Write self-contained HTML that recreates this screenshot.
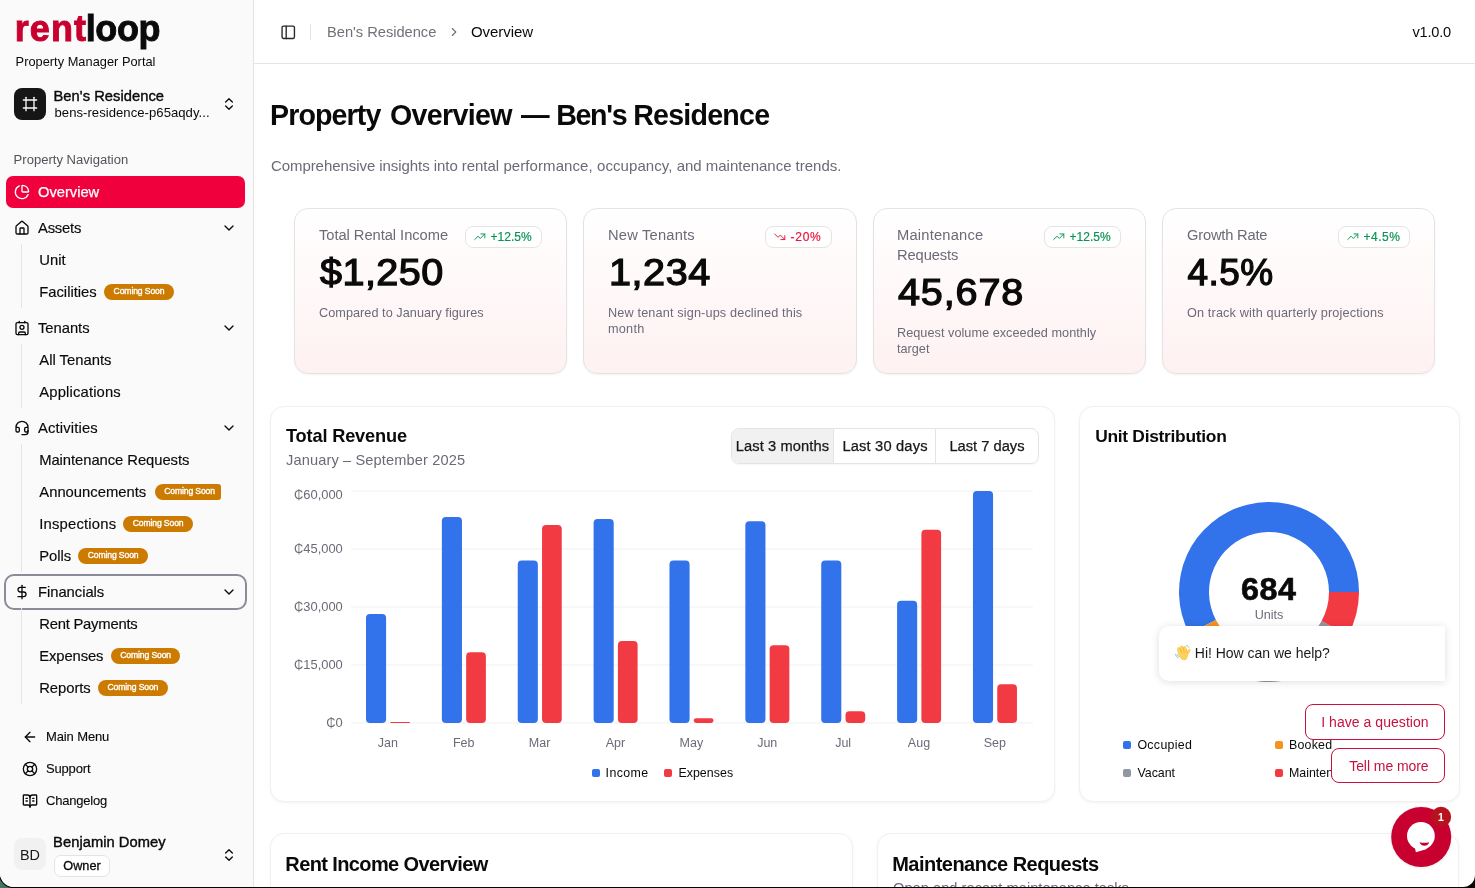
<!DOCTYPE html>
<html lang="en">
<head>
<meta charset="utf-8">
<title>Rentloop — Property Overview</title>
<style>
*{box-sizing:border-box;margin:0;padding:0}
html,body{width:1475px;height:888px;overflow:hidden;background:#060807}
body:before{content:"";position:absolute;left:0;top:870px;width:15px;height:18px;background:linear-gradient(90deg,#4c7462,#3a5f52)}
body{font-family:"Liberation Sans",Arial,sans-serif;color:#0a0a0a;-webkit-font-smoothing:antialiased}
#win{position:absolute;left:0;top:0;width:1475px;height:887px;background:#fff;overflow:hidden;border-radius:0 0 12px 14px;will-change:transform;box-shadow:0 0 0 1.2px #040605}
.abs{position:absolute;white-space:nowrap}
svg.ic{position:absolute;fill:none;stroke:currentColor;stroke-width:2;stroke-linecap:round;stroke-linejoin:round}
/* sidebar */
#side{position:absolute;left:0;top:0;width:254px;height:888px;background:#fafafa;border-right:1px solid #e4e4e7}
.nav{position:absolute;left:38px;-webkit-text-stroke:.15px currentColor;font-size:14.8px;line-height:20px;color:#0a0a0a;white-space:nowrap}
.sub{position:absolute;left:39.2px;-webkit-text-stroke:.15px currentColor;font-size:14.8px;line-height:20px;color:#0a0a0a;white-space:nowrap}
.soon{position:absolute;height:16.3px;letter-spacing:-.12px;border-radius:8px;background:#cc7a00;color:#fff;font-size:8.6px;line-height:14.8px;text-align:center;white-space:nowrap;overflow:hidden;-webkit-text-stroke:.35px #fff}
.vl{position:absolute;left:21px;width:1px;background:#e4e4e7}
.foot{position:absolute;left:46px;-webkit-text-stroke:.12px currentColor;font-size:13px;line-height:18px;white-space:nowrap}
/* main */
#hdr{position:absolute;left:254px;top:0;width:1221px;height:64px;border-bottom:1px solid #e4e4e7;background:#fff}
.card{position:absolute;top:208px;width:273px;height:166px;border:1px solid #e3e3e6;border-radius:14px;background:linear-gradient(180deg,#ffffff 0%,#fff8f8 50%,#fef1f2 100%);box-shadow:0 1px 2px rgba(0,0,0,.05)}
.card .lbl{position:absolute;left:24px;top:16px;font-size:14.7px;line-height:20px;color:#6b6b78;white-space:nowrap}
.card .val{position:absolute;left:24.5px;font-size:37px;font-weight:400;-webkit-text-stroke:1.25px #0a0a0a;letter-spacing:2px;line-height:40px;color:#0a0a0a;white-space:nowrap;transform:scaleX(1.07);transform-origin:0 0}
.card .ft{position:absolute;left:24px;font-size:12.7px;line-height:16px;color:#6b6b78;white-space:nowrap}
.chip{position:absolute;top:17px;height:22px;border:1px solid #e4e4e7;border-radius:8px;background:#fff;font-size:12px;line-height:20px;white-space:nowrap;-webkit-text-stroke:.2px currentColor}
.chip span{position:absolute;left:24.6px;top:0}
.up{color:#0c9456}.down{color:#e6173d}
.panel{position:absolute;background:#fff;border:1px solid #f1f1f3;border-radius:14px;box-shadow:0 1px 3px rgba(0,0,0,.05)}
.ptitle{position:absolute;font-size:18.2px;font-weight:700;line-height:24px;letter-spacing:-.2px;white-space:nowrap}
.lg{position:absolute;font-size:12.4px;line-height:16px;color:#0a0a0a;white-space:nowrap}
.sb{-webkit-text-stroke:.4px currentColor}.md{-webkit-text-stroke:.25px currentColor}
.sq{position:absolute;width:8px;height:8px;border-radius:2px}
</style>
</head>
<body>
<div id="win">

<!-- ============ MAIN ============ -->
<div id="hdr">
  <svg class="ic" style="left:25.55px;top:23.65px;color:#27272a" width="16.500" height="16.500" viewBox="0 0 24 24"><rect width="18" height="18" x="3" y="3" rx="2"/><path d="M9 3v18"/></svg>
  <div class="abs" style="left:56px;top:24px;width:1px;height:16px;background:#e4e4e7"></div>
  <div class="abs" id="bc1" style="letter-spacing:-0.03px;left:73.0px;top:22px;font-size:14.7px;line-height:20px;color:#71717a">Ben's Residence</div>
  <svg class="ic" style="left:192.9px;top:25px;color:#71717a" width="14" height="14" viewBox="0 0 24 24"><path d="m9 18 6-6-6-6"/></svg>
  <div class="abs" id="bc2" style="letter-spacing:-0.07px;left:217px;top:22px;font-size:15px;line-height:20px;color:#0a0a0a">Overview</div>
  <div class="abs" id="ver" style="letter-spacing:-0.2px;right:24px;top:22px;font-size:14.6px;line-height:20px;color:#0a0a0a">v1.0.0</div>
</div>

<h1 class="abs" id="h1" style="left:0;top:96px;font-size:28.6px;font-weight:700;line-height:38px;letter-spacing:-.8px"><span class="abs" style="letter-spacing:-0.9px;left:270px;top:0">Property</span> <span class="abs" style="letter-spacing:-0.66px;left:390px;top:0">Overview</span> <span class="abs" style="left:520.9px;top:0">—</span> <span class="abs" style="letter-spacing:-1.32px;left:556.2px;top:0">Ben's</span> <span class="abs" style="letter-spacing:-0.77px;left:633.2px;top:0">Residence</span></h1>
<p class="abs" id="subt" style="left:0;top:156px;font-size:15px;line-height:20px;color:#6b6b78"><span class="abs" style="letter-spacing:-0.06px;left:270.9px;top:0">Comprehensive insights into rental</span> <span class="abs" style="letter-spacing:0.08px;left:503.4px;top:0">performance, occupancy,</span> <span class="abs" style="letter-spacing:-0.02px;left:676.7px;top:0">and maintenance trends.</span></p>

<!-- stat cards -->
<div class="card" style="left:294px">
  <div class="lbl" style="letter-spacing:-0.04px">Total Rental Income</div>
  <div class="chip up" style="left:170px;width:77px"><svg class="ic" style="left:7.2px;top:3.3px;stroke-width:1.7" width="13.500" height="13.500" viewBox="0 0 24 24"><path d="M3 17l6-6 4 4 8-8"/><path d="M14 7h7v7"/></svg><span style="letter-spacing:0px">+12.5%</span></div>
  <div class="val" style="letter-spacing:0.4px;top:44px">$1,250</div>
  <div class="ft" style="letter-spacing:0.04px;top:96px">Compared to January figures</div>
</div>
<div class="card" style="left:583px;width:274px">
  <div class="lbl" style="letter-spacing:0.2px">New Tenants</div>
  <div class="chip down" style="left:181px;width:67px"><svg class="ic" style="left:7.2px;top:3.3px;stroke-width:1.7" width="13.500" height="13.500" viewBox="0 0 24 24"><path d="M3 7l6 6 4-4 8 8"/><path d="M21 10v7h-7"/></svg><span style="letter-spacing:.7px">-20%</span></div>
  <div class="val" style="letter-spacing:0.5px;top:44px">1,234</div>
  <div class="ft" style="letter-spacing:0.14px;top:96px">New tenant sign-ups declined this</div><div class="ft" style="letter-spacing:0.25px;top:112px">month</div>
</div>
<div class="card" style="left:873px">
  <div class="lbl" style="letter-spacing:0.2px;left:23px">Maintenance</div><div class="lbl" style="letter-spacing:-0.1px;left:23px;top:36px">Requests</div>
  <div class="chip up" style="left:170px;width:77px"><svg class="ic" style="left:7.2px;top:3.3px;stroke-width:1.7" width="13.500" height="13.500" viewBox="0 0 24 24"><path d="M3 17l6-6 4 4 8-8"/><path d="M14 7h7v7"/></svg><span style="letter-spacing:0px">+12.5%</span></div>
  <div class="val" style="letter-spacing:0.8px;left:23.6px;top:64px">45,678</div>
  <div class="ft" style="letter-spacing:0.03px;left:23px;top:116px">Request volume exceeded monthly</div><div class="ft" style="letter-spacing:0.0px;left:23px;top:132px">target</div>
</div>
<div class="card" style="left:1162px">
  <div class="lbl" style="letter-spacing:-0.2px">Growth Rate</div>
  <div class="chip up" style="left:175px;width:72px"><svg class="ic" style="left:7.2px;top:3.3px;stroke-width:1.7" width="13.500" height="13.500" viewBox="0 0 24 24"><path d="M3 17l6-6 4 4 8-8"/><path d="M14 7h7v7"/></svg><span style="letter-spacing:.5px">+4.5%</span></div>
  <div class="val" style="letter-spacing:0.44px;transform:none;top:44px">4.5%</div>
  <div class="ft" style="letter-spacing:0.14px;top:96px">On track with quarterly projections</div>
</div>

<!-- REVENUE -->
<div class="panel" id="rev" style="left:270px;top:406px;width:785px;height:396px">
  <div class="ptitle" style="letter-spacing:-0.16px;left:15px;top:17px">Total Revenue</div>
  <div class="abs" style="letter-spacing:0.13px;left:15px;top:43px;font-size:14.6px;line-height:20px;color:#6b6b78">January – September 2025</div>
  <div class="abs" style="left:460px;top:21px;width:308px;height:36px;border:1px solid #e4e4e7;border-radius:8px;overflow:hidden;font-size:14.7px;line-height:34px;color:#18181b;box-shadow:0 1px 2px rgba(0,0,0,.04);-webkit-text-stroke:.25px #18181b">
    <div class="abs" style="left:0;top:0;width:101px;height:34px;background:#f1f1f2"></div><div class="abs" style="letter-spacing:0.1px;left:3.7px;top:0">Last 3 months</div>
    <div class="abs" style="left:101px;top:0;width:1px;height:34px;background:#e4e4e7"></div><div class="abs" style="letter-spacing:0.17px;left:110.4px;top:0">Last 30 days</div>
    <div class="abs" style="left:203px;top:0;width:1px;height:34px;background:#e4e4e7"></div><div class="abs" style="letter-spacing:-0.0px;left:217.4px;top:0">Last 7 days</div>
  </div>
  <svg id="chart" class="abs" style="left:0;top:70px" width="785" height="290" viewBox="0 0 785 290" font-family="Liberation Sans, Arial, sans-serif" font-size="12.5" fill="#6b6b78">
    <rect x="80" y="245.4" width="682" height="1" fill="#f1f1f3"/>
    <text x="71.8" y="250.2" text-anchor="end" font-size="12.9">₵0</text>
    <rect x="80" y="187.44" width="682" height="1" fill="#f1f1f3"/>
    <text x="71.8" y="192.24" text-anchor="end" font-size="12.9">₵15,000</text>
    <rect x="80" y="129.48" width="682" height="1" fill="#f1f1f3"/>
    <text x="71.8" y="134.28" text-anchor="end" font-size="12.9">₵30,000</text>
    <rect x="80" y="71.52" width="682" height="1" fill="#f1f1f3"/>
    <text x="71.8" y="76.32" text-anchor="end" font-size="12.9">₵45,000</text>
    <rect x="80" y="13.56" width="682" height="1" fill="#f1f1f3"/>
    <text x="71.8" y="21.96" text-anchor="end" font-size="12.9">₵60,000</text>
    <rect x="95.0" y="136.94" width="20.1" height="108.96" rx="4" fill="#3272ea"/>
    <rect x="119.3" y="244.9" width="19.7" height="1.0" rx="0.5" fill="#f23a42"/>
    <text x="116.9" y="270.2" text-anchor="middle">Jan</text>
    <rect x="170.87" y="39.95" width="20.1" height="205.95" rx="4" fill="#3272ea"/>
    <rect x="195.17" y="175.19" width="19.7" height="70.71" rx="4" fill="#f23a42"/>
    <text x="192.77" y="270.2" text-anchor="middle">Feb</text>
    <rect x="246.74" y="83.61" width="20.1" height="162.29" rx="4" fill="#3272ea"/>
    <rect x="271.04" y="48.06" width="19.7" height="197.84" rx="4" fill="#f23a42"/>
    <text x="268.64" y="270.2" text-anchor="middle">Mar</text>
    <rect x="322.61" y="42.07" width="20.1" height="203.83" rx="4" fill="#3272ea"/>
    <rect x="346.91" y="163.98" width="19.7" height="81.92" rx="4" fill="#f23a42"/>
    <text x="344.51" y="270.2" text-anchor="middle">Apr</text>
    <rect x="398.48" y="83.61" width="20.1" height="162.29" rx="4" fill="#3272ea"/>
    <rect x="422.78" y="241.26" width="19.7" height="4.64" rx="2.32" fill="#f23a42"/>
    <text x="420.38" y="270.2" text-anchor="middle">May</text>
    <rect x="474.35" y="44.2" width="20.1" height="201.7" rx="4" fill="#3272ea"/>
    <rect x="498.65" y="168.23" width="19.7" height="77.67" rx="4" fill="#f23a42"/>
    <text x="496.25" y="270.2" text-anchor="middle">Jun</text>
    <rect x="550.22" y="83.61" width="20.1" height="162.29" rx="4" fill="#3272ea"/>
    <rect x="574.52" y="234.31" width="19.7" height="11.59" rx="4" fill="#f23a42"/>
    <text x="572.12" y="270.2" text-anchor="middle">Jul</text>
    <rect x="626.09" y="123.8" width="20.1" height="122.1" rx="4" fill="#3272ea"/>
    <rect x="650.39" y="52.7" width="19.7" height="193.2" rx="4" fill="#f23a42"/>
    <text x="647.99" y="270.2" text-anchor="middle">Aug</text>
    <rect x="701.96" y="14.06" width="20.1" height="231.84" rx="4" fill="#3272ea"/>
    <rect x="726.26" y="207.26" width="19.7" height="38.64" rx="4" fill="#f23a42"/>
    <text x="723.86" y="270.2" text-anchor="middle">Sep</text>
  </svg>
  <div class="sq" style="left:321px;top:362px;background:#3272ea"></div><div class="lg" style="letter-spacing:0.4px;left:334.6px;top:358px">Income</div>
  <div class="sq" style="left:393px;top:362px;background:#f23a42"></div><div class="lg" style="letter-spacing:0.04px;left:407.4px;top:358px">Expenses</div>
</div>

<!-- UNIT DIST -->
<div class="panel" id="ud" style="left:1079px;top:406px;width:381px;height:396px">
  <div class="ptitle" style="left:15.2px;top:17px;font-size:17.4px;letter-spacing:-0.29px">Unit Distribution</div>
  <svg class="abs" style="left:88.85px;top:84.9px" width="200" height="200" viewBox="-100 -100 200 200" id="donut">
    <path d="M90.00 -0.00A90 90 0 1 0 -79.69 41.84L-53.12 27.89A60 60 0 1 1 60.00 -0.00Z" fill="#3272ea"/>
    <path d="M-79.69 41.84A90 90 0 0 0 -63.64 63.64L-42.43 42.43A60 60 0 0 1 -53.12 27.89Z" fill="#f5931f"/>
    <path d="M-63.64 63.64A90 90 0 0 0 78.87 43.36L52.58 28.91A60 60 0 0 1 -42.43 42.43Z" fill="#9096a2"/>
    <path d="M78.87 43.36A90 90 0 0 0 90.00 0.00L60.00 0.00A60 60 0 0 1 52.58 28.91Z" fill="#f23a42"/>
  </svg>
  <div class="abs" style="letter-spacing:0.5px;left:160.5px;top:164px;font-size:30.5px;font-weight:700;line-height:36px;-webkit-text-stroke:.6px #0a0a0a;transform:scaleX(1.06);transform-origin:0 0">684</div>
  <div class="abs" style="letter-spacing:-0.01px;left:174.7px;top:200px;font-size:12.6px;line-height:16px;color:#6b6b78">Units</div>
  <div class="sq" style="left:43px;top:334px;background:#3272ea"></div><div class="lg" style="letter-spacing:0.32px;left:57.4px;top:330px">Occupied</div>
  <div class="sq" style="left:195.2px;top:334px;background:#f5931f"></div><div class="lg" style="letter-spacing:.2px;left:209px;top:330px">Booked</div>
  <div class="sq" style="left:43px;top:362px;background:#9096a2"></div><div class="lg" style="letter-spacing:0.0px;left:57.4px;top:358px">Vacant</div>
  <div class="sq" style="left:195.2px;top:362px;background:#f23a42"></div><div class="lg" style="left:209px;top:358px">Maintenance</div>
</div>

<!-- bottom panels -->
<div class="panel" style="left:270px;top:833px;width:583px;height:120px">
  <div class="ptitle" style="left:14.3px;top:15.500px;font-size:20px;line-height:28px;letter-spacing:-0.61px">Rent Income Overview</div>
</div>
<div class="panel" style="left:877px;top:833px;width:582px;height:120px">
  <div class="ptitle" style="left:14.2px;top:15.500px;font-size:20px;line-height:28px;letter-spacing:-0.52px">Maintenance Requests</div>
  <div class="abs" style="left:15px;top:44px;font-size:14.7px;line-height:20px;color:#6b6b78">Open and recent maintenance tasks</div>
</div>

<!-- chat widget -->
<div class="abs" style="left:1159px;top:626px;width:286px;height:54.500px;background:#fff;border-radius:10px 0 0 10px;box-shadow:0 1px 8px rgba(0,0,0,.13);font-size:14px;line-height:54px;color:#1a1a1a">
  <svg class="abs" style="left:16px;top:19px" width="17" height="17" viewBox="0 0 17 17" aria-label="👋"><title>👋</title><path d="M2.400 6.500C1.800 4.500 2 2.800 3 2.200 4 1.600 4.600 2.400 4.900 3 4.600 1.600 5.400.700 6.400.600 7.400.500 8 1.300 8.200 2.300 8.300 1.300 9.200.900 10 1.100c1 .3 1.400 1.300 1.600 2.900l.6 2.600c.4-1.400 1.400-3 2.600-2.900 1 .2.900 1.300.5 2.300-.6 1.400-1.300 2.600-1.900 3.700-.5 1.900-1.200 3.700-2 4.700-.8.800-1.800 1.100-2.700.9-1.300-.2-2.400-.8-3.200-1.700C4.200 12 2.900 9 2.400 6.500z" fill="#fcd15c"/><path d="M5 3.200 6.600 7.600M8.200 2.500l.9 4.600M11.500 4.300l.5 3" stroke="#f2ae3e" stroke-width=".7" fill="none" stroke-linecap="round"/><path d="M.6 9.300c.2 1.600 1 2.900 2.300 3.600M2.100 9.600c.2.900.7 1.600 1.400 2M11.600.500c1 .2 1.800.9 2.200 1.900M10.800 1.600" stroke="#62b5ea" stroke-width=".8" fill="none" stroke-linecap="round"/></svg>
  <span class="abs" style="letter-spacing:-0.02px;left:35.8px;top:0">Hi! How can we help?</span>
</div>
<div class="abs" style="left:1305px;top:704px;width:140px;height:36px;border:1px solid #c9103f;border-radius:8px;background:#fff;color:#c9103f;font-size:14px;line-height:34px;"><span class="abs" style="letter-spacing:0.05px;left:15.2px;top:0">I have a question</span></div>
<div class="abs" style="left:1331px;top:748px;width:114px;height:35px;border:1px solid #c9103f;border-radius:8px;background:#fff;color:#c9103f;font-size:14px;line-height:34px;"><span class="abs" style="letter-spacing:-0.06px;left:17.2px;top:0">Tell me more</span></div>
<svg class="abs" style="left:1386px;top:802px" width="70" height="70" viewBox="1386 802 70 70"><circle cx="1421.200" cy="837.300" r="31.500" fill="#000" opacity=".04"/><circle cx="1421.200" cy="837" r="30" fill="#c8002f"/><circle cx="1420.900" cy="835.800" r="13.900" fill="#fff"/><path d="M1414.600 846.500 1415.900 852.200 1427 849 1421 845z" fill="#fff"/><path d="M1419.500 842.200q4.900 1 9.900 0-1.600 3.600-5 3.600-3.300 0-4.900-3.600z" fill="#c8002f"/><circle cx="1441.050" cy="816.900" r="10.100" fill="#b9121f"/></svg>
<div class="abs" style="left:1431px;top:806.900px;width:20px;height:20px;color:#fff;font-size:10.500px;font-weight:700;line-height:20px;text-align:center">1</div>

<!-- ============ SIDEBAR ============ -->
<div id="side">
  <div class="abs" id="logo" style="left:0;top:8px;font-size:36px;font-weight:700;line-height:42px"><span class="abs" style="left:14.800px;top:0;color:#c8002f;-webkit-text-stroke:.9px #c8002f;letter-spacing:1.03px">rent</span><span class="abs" style="left:85.700px;top:0;color:#0a0a0a;-webkit-text-stroke:.9px #0a0a0a;letter-spacing:-.4px">loop</span></div>
  <div class="abs" id="pmp" style="letter-spacing:0.02px;left:15.6px;top:53px;font-size:12.8px;line-height:18px;color:#0a0a0a">Property Manager Portal</div>

  <div class="abs" style="left:14px;top:88px;width:32px;height:32px;border-radius:8px;background:#161616"></div>
  <svg class="ic" style="left:22px;top:96px;color:#fafafa" width="16" height="16" viewBox="0 0 24 24"><line x1="22" x2="2" y1="6" y2="6"/><line x1="22" x2="2" y1="18" y2="18"/><line x1="6" x2="6" y1="2" y2="22"/><line x1="18" x2="18" y1="2" y2="22"/></svg>
  <div class="abs sb" style="letter-spacing:0.05px;left:53.5px;top:86px;font-size:14.7px;line-height:20px">Ben's Residence</div>
  <div class="abs" style="letter-spacing:0.04px;left:54.5px;top:105px;font-size:13.1px;line-height:16px">bens-residence-p65aqdy...</div>
  <svg class="ic" style="left:221px;top:96px" width="16" height="16" viewBox="0 0 24 24"><path d="m7 15 5 5 5-5"/><path d="m7 9 5-5 5 5"/></svg>

  <div class="abs" style="letter-spacing:-0.0px;left:13.6px;top:152px;font-size:13.05px;line-height:16px;color:#52525b">Property Navigation</div>

  <div class="abs" style="left:6px;top:176px;width:239px;height:32px;border-radius:7px;background:#f0003c"></div>
  <svg class="ic" style="left:14px;top:184px;color:#fff" width="16" height="16" viewBox="0 0 24 24"><path d="M21 12c.552 0 1.005-.449.95-.998a10 10 0 0 0-8.953-8.951c-.55-.055-.998.398-.998.95v8a1 1 0 0 0 1 1z"/><path d="M21.210 15.890A10 10 0 1 1 8 2.830"/></svg>
  <div class="nav md" style="letter-spacing:0.0px;top:182px;color:#fff;font-size:14.7px">Overview</div>

  <svg class="ic" style="left:14px;top:220px" width="16" height="16" viewBox="0 0 24 24"><path d="M15 21v-8a1 1 0 0 0-1-1h-4a1 1 0 0 0-1 1v8"/><path d="M3 10a2 2 0 0 1 .709-1.528l7-5.999a2 2 0 0 1 2.582 0l7 5.999A2 2 0 0 1 21 10v9a2 2 0 0 1-2 2H5a2 2 0 0 1-2-2z"/></svg>
  <div class="nav" style="letter-spacing:-0.2px;top:218px">Assets</div>
  <svg class="ic" style="left:221px;top:220px" width="16" height="16" viewBox="0 0 24 24"><path d="m6 9 6 6 6-6"/></svg>
  <div class="vl" style="top:244px;height:64px"></div>
  <div class="sub" style="letter-spacing:0.04px;top:250px">Unit</div>
  <div class="sub" style="letter-spacing:0.0px;top:282px">Facilities</div><div class="soon" style="left:103.8px;top:283.8px;width:70.4px">Coming Soon</div>

  <svg class="ic" style="left:14px;top:320px" width="16" height="16" viewBox="0 0 24 24"><path d="M16 2v2"/><path d="M7 22v-2a2 2 0 0 1 2-2h6a2 2 0 0 1 2 2v2"/><path d="M8 2v2"/><circle cx="12" cy="11" r="3"/><rect x="3" y="4" width="18" height="18" rx="2"/></svg>
  <div class="nav" style="letter-spacing:-0.04px;top:318px">Tenants</div>
  <svg class="ic" style="left:221px;top:320px" width="16" height="16" viewBox="0 0 24 24"><path d="m6 9 6 6 6-6"/></svg>
  <div class="vl" style="top:344px;height:64px"></div>
  <div class="sub" style="left:39.3px;letter-spacing:-0.0px;top:350px">All Tenants</div>
  <div class="sub" style="left:39.3px;letter-spacing:0.15px;top:382px">Applications</div>

  <svg class="ic" style="left:14px;top:420px" width="16" height="16" viewBox="0 0 24 24"><path d="M3 11h3a2 2 0 0 1 2 2v3a2 2 0 0 1-2 2H5a2 2 0 0 1-2-2v-5Zm0 0a9 9 0 1 1 18 0m0 0v5a2 2 0 0 1-2 2h-1a2 2 0 0 1-2-2v-3a2 2 0 0 1 2-2h3Z"/><path d="M21 16v2a4 4 0 0 1-4 4h-5"/></svg>
  <div class="nav" style="letter-spacing:0.15px;top:418px">Activities</div>
  <svg class="ic" style="left:221px;top:420px" width="16" height="16" viewBox="0 0 24 24"><path d="m6 9 6 6 6-6"/></svg>
  <div class="vl" style="top:444px;height:128px"></div>
  <div class="sub" style="letter-spacing:-0.06px;top:450px">Maintenance Requests</div>
  <div class="sub" style="left:39.3px;letter-spacing:0.0px;top:482px">Announcements</div><div class="soon" style="left:155.2px;top:483.8px;width:66.2px;border-radius:8px 3px 3px 8px;text-align:left;padding-left:9px">Coming Soon</div>
  <div class="sub" style="letter-spacing:0.2px;top:514px">Inspections</div><div class="soon" style="left:123.2px;top:515.8px;width:69.8px">Coming Soon</div>
  <div class="sub" style="letter-spacing:0.0px;top:546px">Polls</div><div class="soon" style="left:78.1px;top:547.8px;width:70px">Coming Soon</div>

  <div class="abs" style="left:4px;top:574px;width:243px;height:36px;border:2px solid #8a8b9b;border-radius:10px;background:#fafafa"></div>
  <svg class="ic" style="left:14px;top:584px" width="16" height="16" viewBox="0 0 24 24"><line x1="12" x2="12" y1="2" y2="22"/><path d="M17 5H9.500a3.500 3.500 0 0 0 0 7h5a3.500 3.500 0 0 1 0 7H6"/></svg>
  <div class="nav" style="letter-spacing:-0.04px;top:582px">Financials</div>
  <svg class="ic" style="left:221px;top:584px" width="16" height="16" viewBox="0 0 24 24"><path d="m6 9 6 6 6-6"/></svg>
  <div class="vl" style="top:608px;height:96px"></div>
  <div class="sub" style="letter-spacing:-0.22px;top:614px">Rent Payments</div>
  <div class="sub" style="letter-spacing:-0.1px;top:646px">Expenses</div><div class="soon" style="left:110.9px;top:647.8px;width:69.5px">Coming Soon</div>
  <div class="sub" style="letter-spacing:-0.04px;top:678px">Reports</div><div class="soon" style="left:97.9px;top:679.8px;width:70px">Coming Soon</div>

  <svg class="ic" style="left:22px;top:729px" width="16" height="16" viewBox="0 0 24 24"><path d="m12 19-7-7 7-7"/><path d="M19 12H5"/></svg>
  <div class="foot" style="letter-spacing:-0.12px;top:728px">Main Menu</div>
  <svg class="ic" style="left:22px;top:761px" width="16" height="16" viewBox="0 0 24 24"><circle cx="12" cy="12" r="10"/><path d="m4.930 4.930 4.240 4.240"/><path d="m14.830 9.170 4.240-4.240"/><path d="m14.830 14.830 4.240 4.240"/><path d="m9.170 14.830-4.240 4.240"/><circle cx="12" cy="12" r="4"/></svg>
  <div class="foot" style="letter-spacing:-0.17px;top:760px">Support</div>
  <svg class="ic" style="left:22px;top:793px" width="16" height="16" viewBox="0 0 24 24"><path d="M12 7v14"/><path d="M16 12h2"/><path d="M16 8h2"/><path d="M3 18a1 1 0 0 1-1-1V4a1 1 0 0 1 1-1h5a4 4 0 0 1 4 4 4 4 0 0 1 4-4h5a1 1 0 0 1 1 1v13a1 1 0 0 1-1 1h-6a3 3 0 0 0-3 3 3 3 0 0 0-3-3z"/><path d="M6 12h2"/><path d="M6 8h2"/></svg>
  <div class="foot" style="letter-spacing:-0.21px;top:792px">Changelog</div>

  <div class="abs" style="left:14px;top:838px;width:32px;height:32px;border-radius:8px;background:#f1f1f2;font-size:14.4px;line-height:34px;text-align:center;color:#18181b">BD</div>
  <div class="abs sb" style="letter-spacing:0.05px;left:53.1px;top:832px;font-size:14.7px;line-height:20px">Benjamin Domey</div>
  <div class="abs" style="left:54px;top:855px;width:56px;height:22px;border:1px solid #e4e4e7;border-radius:7px;background:#fff;font-size:12.7px;line-height:20px;text-align:center;-webkit-text-stroke:.3px #0a0a0a">Owner</div>
  <svg class="ic" style="left:221px;top:847px" width="16" height="16" viewBox="0 0 24 24"><path d="m7 15 5 5 5-5"/><path d="m7 9 5-5 5 5"/></svg>
</div>

</div>
</body>
</html>
